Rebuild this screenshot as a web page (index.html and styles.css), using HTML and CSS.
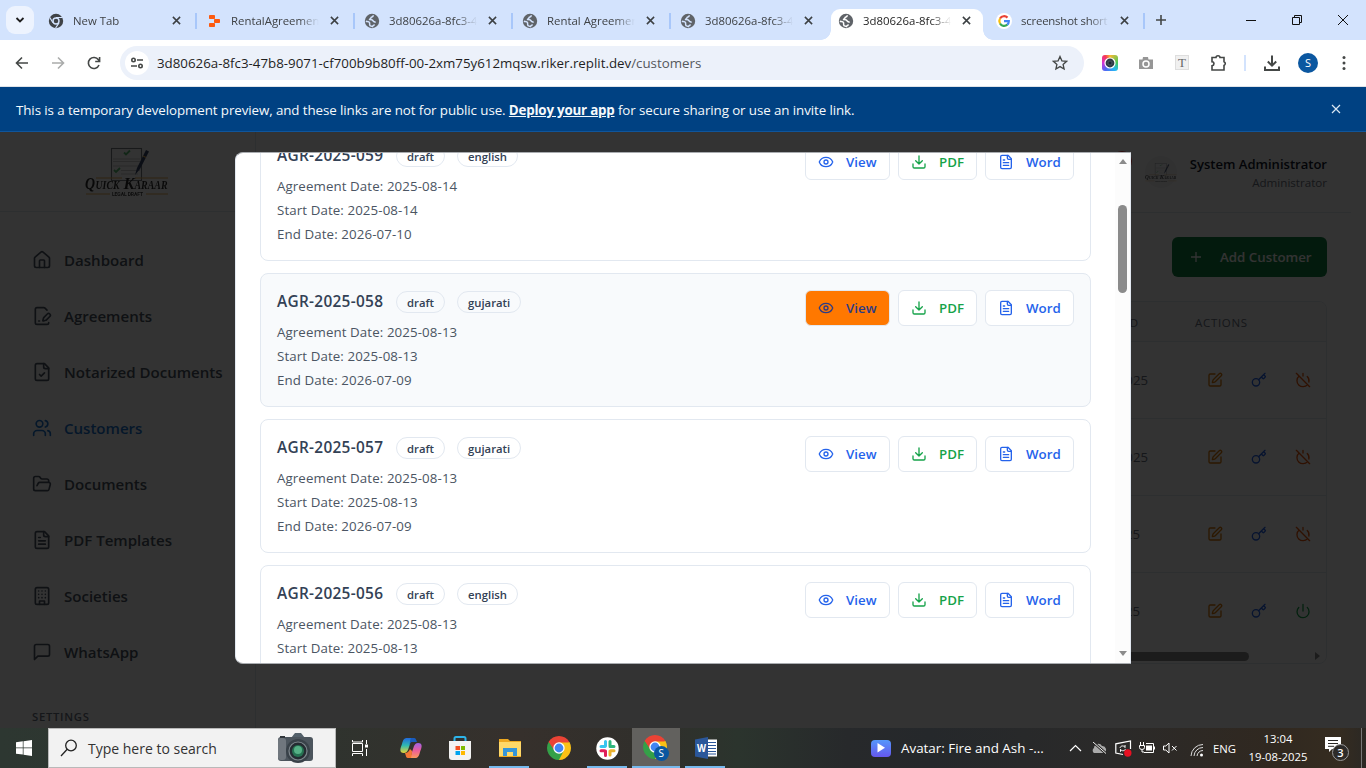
FILE: index.html
```html
<!DOCTYPE html>
<html lang="en">
<head>
<meta charset="utf-8">
<title>Customers</title>
<link rel="stylesheet" href="styles.css">
</head>
<body>
<svg class="defs" aria-hidden="true">
  <symbol id="x" viewBox="0 0 10 10"><path d="M1 1l8 8M9 1L1 9"/></symbol>
  <symbol id="globe" viewBox="0 0 16 16"><circle cx="8" cy="8" r="7.200" fill="#5f6368"/><path d="M9.300 2.200C9.300 3.800 8.300 4 7.300 4.300 6.900 5.800 5.800 5.400 5.600 6.500c1.700 0 3.200.2 3.600 1.500.3 1 2 .5 2.200 1.700M1.800 8.200c1.400.4 3.200.1 3.700 1.300.4 1-.3 2 .5 3.200l2.500.9c.3-1.300 1-1.600 2.200-1.900" fill="none" stroke="var(--tab)" stroke-width="1.500"/></symbol>
  <symbol id="home" viewBox="0 0 24 24"><path d="M15 21v-8a1 1 0 0 0-1-1h-4a1 1 0 0 0-1 1v8"/><path d="M3 10a2 2 0 0 1 .709-1.528l7-5.999a2 2 0 0 1 2.582 0l7 5.999A2 2 0 0 1 21 10v9a2 2 0 0 1-2 2H5a2 2 0 0 1-2-2z"/></symbol>
  <symbol id="sign" viewBox="0 0 24 24"><path d="m18 5-2.414-2.414A2 2 0 0 0 14.172 2H6a2 2 0 0 0-2 2v16a2 2 0 0 0 2 2h12a2 2 0 0 0 2-2"/><path d="M21.378 12.626a1 1 0 0 0-3.004-3.004l-4.010 4.012a2 2 0 0 0-.506.854l-.837 2.870a.5.5 0 0 0 .62.62l2.870-.837a2 2 0 0 0 .854-.506z"/><path d="M8 18h1"/></symbol>
  <symbol id="check" viewBox="0 0 24 24"><path d="M15 2H6a2 2 0 0 0-2 2v16a2 2 0 0 0 2 2h12a2 2 0 0 0 2-2V7Z"/><path d="M14 2v4a2 2 0 0 0 2 2h4M9 15l2 2 4-4"/></symbol>
  <symbol id="users" viewBox="0 0 24 24"><path d="M16 21v-2a4 4 0 0 0-4-4H6a4 4 0 0 0-4 4v2"/><circle cx="9" cy="7" r="4"/><path d="M22 21v-2a4 4 0 0 0-3-3.870M16 3.130a4 4 0 0 1 0 7.750"/></symbol>
  <symbol id="folder" viewBox="0 0 24 24"><path d="m6 14 1.500-2.900A2 2 0 0 1 9.240 10H20a2 2 0 0 1 1.940 2.500l-1.540 6a2 2 0 0 1-1.950 1.500H4a2 2 0 0 1-2-2V5a2 2 0 0 1 2-2h3.900a2 2 0 0 1 1.690.9l.81 1.200a2 2 0 0 0 1.670.9H18a2 2 0 0 1 2 2v2"/></symbol>
  <symbol id="text" viewBox="0 0 24 24"><path d="M15 2H6a2 2 0 0 0-2 2v16a2 2 0 0 0 2 2h12a2 2 0 0 0 2-2V7Z"/><path d="M14 2v4a2 2 0 0 0 2 2h4M10 9H8M16 13H8M16 17H8"/></symbol>
  <symbol id="building" viewBox="0 0 24 24"><rect x="4" y="2" width="16" height="20" rx="2"/><path d="M9 22v-4h6v4M8 6h.01M16 6h.01M12 6h.01M12 10h.01M12 14h.01M16 10h.01M16 14h.01M8 10h.01M8 14h.01"/></symbol>
  <symbol id="chat" viewBox="0 0 24 24"><path d="M21 15a2 2 0 0 1-2 2H7l-4 4V5a2 2 0 0 1 2-2h14a2 2 0 0 1 2 2z"/></symbol>
  <symbol id="eye" viewBox="0 0 24 24"><path d="M2.062 12.348a1 1 0 0 1 0-.696 10.750 10.750 0 0 1 19.876 0 1 1 0 0 1 0 .696 10.750 10.750 0 0 1-19.876 0"/><circle cx="12" cy="12" r="3"/></symbol>
  <symbol id="down" viewBox="0 0 24 24"><path d="M21 15v4a2 2 0 0 1-2 2H5a2 2 0 0 1-2-2v-4M7 10l5 5 5-5M12 15V3"/></symbol>
  <symbol id="edit" viewBox="0 0 24 24"><path d="M12 3H5a2 2 0 0 0-2 2v14a2 2 0 0 0 2 2h14a2 2 0 0 0 2-2v-7"/><path d="M18.375 2.625a1 1 0 0 1 3 3l-9.013 9.014a2 2 0 0 1-.853.505l-2.873.84a.5.5 0 0 1-.62-.62l.84-2.873a2 2 0 0 1 .506-.852z"/></symbol>
  <symbol id="key" viewBox="0 0 24 24"><path d="m15.500 7.500 2.300 2.300a1 1 0 0 0 1.400 0l2.100-2.100a1 1 0 0 0 0-1.400L19 4M21 2l-9.600 9.600"/><circle cx="7.500" cy="15.500" r="5.500"/></symbol>
  <symbol id="off" viewBox="0 0 24 24"><path d="M18.360 6.640A9 9 0 0 1 20.770 15M6.160 6.160a9 9 0 1 0 12.680 12.680M12 2v4M2 2l20 20"/></symbol>
  <symbol id="on" viewBox="0 0 24 24"><path d="M12 2v10M18.400 6.600a9 9 0 1 1-12.770.04"/></symbol>
  <symbol id="chrome" viewBox="0 0 24 24"><path d="M12 12L1.610 6A12 12 0 0 1 22.390 6z" fill="#ea4335"/><path d="M12 12L22.390 6A12 12 0 0 1 12 24z" fill="#fbc116"/><path d="M12 12v12A12 12 0 0 1 1.610 6z" fill="#34a048"/><path d="M12 6.500h10.600L17 13z" fill="#fbc116"/><path d="M7.300 14.800L1.610 6 4 3.500 12 6.500z" fill="#ea4335"/><path d="M7.200 14.700L1.610 6l3 9z" fill="#34a048"/><path d="M16.700 14.800L12 24l-3-5z" fill="#34a048"/><circle cx="12" cy="12" r="5.700" fill="#fff"/><circle cx="12" cy="12" r="4.400" fill="#4285f4"/></symbol>
  <symbol id="logo" viewBox="0 0 84 50"><rect x="26.500" y="1.500" width="30" height="32" fill="#fff" stroke="#62666c" stroke-width="1.100"/><path d="M39 5.500l2 2 4-4M29 23l2 2 4-4" fill="none" stroke="#3db45b" stroke-width="1.800"/><path d="M28 12h27M28 14.500h27M28 19h27M36 23.500h19M36 27h17" fill="none" stroke="#c4c4c4" stroke-width="1"/><path d="M50 28l2-7L61 3l3 1.500L55 22z" fill="#152850"/><path d="M58 9l3 1.500" stroke="#e7a43e" stroke-width="1.200"/><path d="M11 31h26M50 31h33M1 47h24M61 47h22" stroke="#e7a43e" stroke-width="1.100"/><g fill="#080808" stroke="none" font-family="Liberation Serif, serif" font-style="italic" font-weight="700"><text x="0" y="42" font-size="16" textLength="10" lengthAdjust="spacingAndGlyphs">Q</text><text x="10.500" y="42" font-size="11.500" textLength="24" lengthAdjust="spacingAndGlyphs">UICK</text><text x="38.500" y="42" font-size="16" textLength="11" lengthAdjust="spacingAndGlyphs">K</text><text x="49.500" y="42" font-size="11.500" textLength="33" lengthAdjust="spacingAndGlyphs">ARAAR</text></g><text x="27" y="49" font-family="Roboto, sans-serif" font-weight="700" font-size="5" textLength="31" fill="#222">LEGAL DRAFT</text></symbol>
</svg>
<div class="screen">
  <header class="tabstrip">
    <div class="tab-search"><svg width="10" height="10" viewBox="0 0 10 10"><path d="M1.500 3l3.500 3.500L8.500 3" fill="none" stroke="#1f1f1f" stroke-width="1.800"/></svg></div>
    <div class="tab"><svg class="fav" viewBox="0 0 16 16"><circle cx="8" cy="8" r="7.200" fill="#3f4347"/><circle cx="8" cy="8" r="3" fill="#3f4347" stroke="#d3e3fd" stroke-width="1.400"/><path d="M8 4.500h6.500M5 9.800L1.800 4.500M11 9.800L7.600 15" stroke="#d3e3fd" stroke-width="1.200"/></svg><span class="tab-title">New Tab</span><svg class="tab-x"><use href="#x"/></svg><i class="tab-sep"></i></div>
    <div class="tab"><svg class="fav" viewBox="0 0 16 16"><g fill="#fc5a10"><rect x="3" y="2" width="6" height="4" rx=".8"/><rect x="8" y="6" width="6" height="4" rx=".8"/><rect x="3" y="10" width="6" height="4" rx=".8"/></g></svg><span class="tab-title">RentalAgreemen</span><svg class="tab-x"><use href="#x"/></svg><i class="tab-sep"></i></div>
    <div class="tab"><svg class="fav"><use href="#globe"/></svg><span class="tab-title">3d80626a-8fc3-4</span><svg class="tab-x"><use href="#x"/></svg><i class="tab-sep"></i></div>
    <div class="tab"><svg class="fav"><use href="#globe"/></svg><span class="tab-title">Rental Agreemer</span><svg class="tab-x"><use href="#x"/></svg><i class="tab-sep"></i></div>
    <div class="tab"><svg class="fav"><use href="#globe"/></svg><span class="tab-title">3d80626a-8fc3-4</span><svg class="tab-x"><use href="#x"/></svg></div>
    <div class="tab tab-active"><svg class="fav"><use href="#globe"/></svg><span class="tab-title">3d80626a-8fc3-4</span><svg class="tab-x"><use href="#x"/></svg></div>
    <div class="tab"><svg class="fav" viewBox="0 0 16 16"><circle cx="8" cy="8" r="8" fill="#fff"/><g fill="none" stroke-width="2.200"><path d="M4 5.500A4.800 4.800 0 0 1 11.500 4.600" stroke="#ea4335"/><path d="M4 5.500a5 5 0 0 0 0 5" stroke="#fbbc05"/><path d="M4 10.500a4.800 4.800 0 0 0 7.300 1.200" stroke="#34a853"/><path d="M8 8.200h4.800a4.800 4.800 0 0 1-1.500 3.500" stroke="#4285f4"/></g></svg><span class="tab-title tight">screenshot short</span><svg class="tab-x"><use href="#x"/></svg><i class="tab-sep"></i></div>
    <svg class="new-tab" viewBox="0 0 12 12"><path d="M6 1v10M1 6h10" stroke="#444746" stroke-width="1.600"/></svg>
    <div class="win-buttons">
      <svg viewBox="0 0 12 12"><path d="M1 6.500h10" stroke="#111"/></svg>
      <svg viewBox="0 0 12 12"><path d="M1.500 3.500h7v7h-7zM3.500 3V1.500h7v7H9" fill="none" stroke="#111"/></svg>
      <svg viewBox="0 0 12 12"><path d="M1 1l10 10M11 1L1 11" stroke="#111"/></svg>
    </div>
  </header>
  <nav class="toolbar">
    <span class="tool"><svg width="14" height="14" viewBox="0 0 14 14"><path d="M13 7H2M7 1.500L1.500 7 7 12.500" class="t1"/></svg></span>
    <span class="tool dim"><svg width="14" height="14" viewBox="0 0 14 14"><path d="M1 7h11M7 1.500L12.500 7 7 12.500" class="t1"/></svg></span>
    <span class="tool"><svg width="14" height="14" viewBox="0 0 14 14"><path d="M12 9a5.500 5.500 0 1 1-.6-5.200L12.500 5M12.600 1v4.500H8.200" class="t1"/></svg></span>
    <div class="omnibox">
      <span class="site-info"><svg width="14" height="14" viewBox="0 0 14 14"><circle cx="3.500" cy="4" r="1.700" class="t1"/><circle cx="10.500" cy="10" r="1.700" class="t1"/><path d="M7 4h6M1 10h6" class="t1"/></svg></span>
      <span class="url">3d80626a-8fc3-47b8-9071-cf700b9b80ff-00-2xm75y612mqsw.riker.replit.dev<span class="path">/customers</span></span>
      <svg class="star" viewBox="0 0 16 16"><path d="M8 1.500l1.900 4.300 4.700.5-3.500 3.100 1 4.600L8 11.600 3.900 14l1-4.600L1.400 6.300l4.700-.5z" class="t1"/></svg>
    </div>
    <span class="tool"><span class="ext-shot"><svg width="12" height="12" viewBox="0 0 12 12"><circle cx="6" cy="6" r="5" fill="#303b46" stroke="#fff" stroke-width="1.200"/><circle cx="6" cy="6" r="2" fill="#1c2733" stroke="#53616e" stroke-width=".7"/></svg></span></span>
    <span class="tool"><svg width="16" height="16" viewBox="0 0 16 16"><path d="M1 4.500h3.500L5 2h5l.5 2.500H15V14H1z" fill="#969696"/><circle cx="8" cy="9" r="3" fill="#969696" stroke="#fff" stroke-width="1.500"/></svg></span>
    <span class="tool"><span class="ext-t">T</span></span>
    <span class="tool"><svg width="18" height="18" viewBox="0 0 18 18"><path d="M3 3.500h4a2 1.800 0 0 1 4 0h4v4.300a1.900 1.900 0 0 1 0 3.600V16H3v-4.300c2.600-.3 2.600-3.700 0-4z" class="t1"/></svg></span>
    <i class="tool-sep"></i>
    <span class="tool"><svg width="18" height="18" viewBox="0 0 18 18"><path d="M9 1.500v10M4.800 7.500L9 11.700l4.200-4.200M2 12.500V16h14v-3.500" class="t1 t2"/></svg></span>
    <span class="tool"><span class="profile">S</span></span>
    <span class="tool"><svg width="4" height="16" viewBox="0 0 4 16"><g fill="#444746"><circle cx="2" cy="2.500" r="1.500"/><circle cx="2" cy="8" r="1.500"/><circle cx="2" cy="13.500" r="1.500"/></g></svg></span>
  </nav>
  <div class="banner"><span class="banner-text">This is a temporary development preview, and these links are not for public use. <b>Deploy your app</b> for secure sharing or use an invite link.</span><svg class="banner-x"><use href="#x"/></svg></div>

  <div class="viewport">
    <div class="app">
      <aside class="sidebar">
        <div class="brand"><svg width="84" height="50"><use href="#logo"/></svg></div>
        <ul class="menu">
          <li><svg class="ic"><use href="#home"/></svg>Dashboard</li>
          <li><svg class="ic"><use href="#sign"/></svg>Agreements</li>
          <li><svg class="ic"><use href="#check"/></svg>Notarized Documents</li>
          <li class="current"><svg class="ic"><use href="#users"/></svg>Customers</li>
          <li><svg class="ic"><use href="#folder"/></svg>Documents</li>
          <li><svg class="ic"><use href="#text"/></svg>PDF Templates</li>
          <li><svg class="ic"><use href="#building"/></svg>Societies</li>
          <li><svg class="ic"><use href="#chat"/></svg>WhatsApp</li>
        </ul>
        <div class="menu-heading">SETTINGS</div>
      </aside>
      <main class="main">
        <div class="topbar">
          <i class="alert-dot"></i>
          <span class="user-pic"><svg width="32" height="19"><use href="#logo"/></svg></span>
          <div class="user"><strong>System Administrator</strong><span>Administrator</span></div>
        </div>
        <div class="page">
          <button class="add"><svg width="16" height="16" viewBox="0 0 16 16"><path d="M8 3v10M3 8h10" stroke="#fff" stroke-width="1.300"/></svg><span>Add Customer</span></button>
          <div class="table">
            <div class="row head"><span class="created">D</span><span class="act-title">ACTIONS</span></div>
            <div class="row"><span class="created">2025</span><span class="acts"><svg class="amber"><use href="#edit"/></svg><svg class="blue"><use href="#key"/></svg><svg class="orange"><use href="#off"/></svg></span></div>
            <div class="row"><span class="created">2025</span><span class="acts"><svg class="amber"><use href="#edit"/></svg><svg class="blue"><use href="#key"/></svg><svg class="orange"><use href="#off"/></svg></span></div>
            <div class="row"><span class="created short">2025</span><span class="acts"><svg class="amber"><use href="#edit"/></svg><svg class="blue"><use href="#key"/></svg><svg class="orange"><use href="#off"/></svg></span></div>
            <div class="row"><span class="created short">2025</span><span class="acts"><svg class="amber"><use href="#edit"/></svg><svg class="blue"><use href="#key"/></svg><svg class="green"><use href="#on"/></svg></span></div>
            <div class="hscroll"><i class="hthumb"></i><i class="harrow"></i></div>
          </div>
        </div>
      </main>
    </div>
    <div class="overlay"></div>
    <section class="modal">
      <div class="cards">
        <article class="card">
          <div class="info"><div class="title-row"><h3>AGR-2025-059</h3><span class="badge">draft</span><span class="badge">english</span></div><p>Agreement Date: 2025-08-14</p><p>Start Date: 2025-08-14</p><p>End Date: 2026-07-10</p></div>
          <div class="btns"><span class="btn view"><svg><use href="#eye"/></svg>View</span><span class="btn pdf"><svg><use href="#down"/></svg>PDF</span><span class="btn word"><svg><use href="#text"/></svg>Word</span></div>
        </article>
        <article class="card hover">
          <div class="info"><div class="title-row"><h3>AGR-2025-058</h3><span class="badge">draft</span><span class="badge">gujarati</span></div><p>Agreement Date: 2025-08-13</p><p>Start Date: 2025-08-13</p><p>End Date: 2026-07-09</p></div>
          <div class="btns"><span class="btn view hot"><svg><use href="#eye"/></svg>View</span><span class="btn pdf"><svg><use href="#down"/></svg>PDF</span><span class="btn word"><svg><use href="#text"/></svg>Word</span></div>
        </article>
        <article class="card">
          <div class="info"><div class="title-row"><h3>AGR-2025-057</h3><span class="badge">draft</span><span class="badge">gujarati</span></div><p>Agreement Date: 2025-08-13</p><p>Start Date: 2025-08-13</p><p>End Date: 2026-07-09</p></div>
          <div class="btns"><span class="btn view"><svg><use href="#eye"/></svg>View</span><span class="btn pdf"><svg><use href="#down"/></svg>PDF</span><span class="btn word"><svg><use href="#text"/></svg>Word</span></div>
        </article>
        <article class="card last">
          <div class="info"><div class="title-row"><h3>AGR-2025-056</h3><span class="badge">draft</span><span class="badge">english</span></div><p>Agreement Date: 2025-08-13</p><p>Start Date: 2025-08-13</p></div>
          <div class="btns"><span class="btn view"><svg><use href="#eye"/></svg>View</span><span class="btn pdf"><svg><use href="#down"/></svg>PDF</span><span class="btn word"><svg><use href="#text"/></svg>Word</span></div>
        </article>
      </div>
      <div class="vscroll"><i class="arrow up"></i><i class="vthumb"></i><i class="arrow dn"></i></div>
    </section>
  </div>

  <footer class="taskbar">
    <span class="start"><svg width="16" height="16" viewBox="0 0 16 16" fill="#fff"><path d="M0 2.200l6.800-.9v6.300H0zM7.500 1.200L16 0v7.600H7.500zM0 8.300h6.800v6.300L0 13.700zM7.500 8.300H16V16l-8.500-1.200z"/></svg></span>
    <div class="search"><svg width="18" height="18" viewBox="0 0 18 18"><circle cx="11" cy="6.500" r="5.300" fill="none" stroke="#222" stroke-width="1.300"/><path d="M7.200 10.300L1 17" stroke="#222" stroke-width="1.300"/></svg><span>Type here to search</span>
      <svg class="camera" width="37" height="32" viewBox="0 0 37 32"><path d="M14 6l4-5h6l4 5z" fill="#54616b"/><rect x="1" y="5" width="35" height="24" rx="3" fill="#4c555d"/><rect x="1" y="6" width="8" height="22" rx="3" fill="#70777e"/><rect x="3" y="4" width="5" height="2" fill="#30363b"/><circle cx="21" cy="19" r="12" fill="#394249"/><circle cx="21" cy="19" r="9" fill="#252c32" stroke="#7d868c" stroke-width="1.200"/><circle cx="21" cy="19" r="6" fill="#267252"/><circle cx="21" cy="18" r="4" fill="#55b085"/></svg></div>
    <span class="task taskview"><svg width="18" height="18" viewBox="0 0 18 18"><path d="M1.500 4.500h10v8h-10zM1.500 1v2h10V1M1.500 17v-2.500h10V17M15.500 1v4M15.500 10v7" fill="none" stroke="#fff"/><rect x="14" y="5.500" width="3" height="3" fill="#fff"/></svg></span>
    <span class="task"><svg width="22" height="20" viewBox="0 0 22 20"><defs><linearGradient id="ca" x1="0" y1="0" x2="0" y2="1"><stop offset="0" stop-color="#2169dd"/><stop offset=".5" stop-color="#30b9b0"/><stop offset="1" stop-color="#e9d436"/></linearGradient><linearGradient id="cb" x1="0" y1="0" x2="0" y2="1"><stop offset="0" stop-color="#9d62e8"/><stop offset=".5" stop-color="#ec5d9b"/><stop offset="1" stop-color="#fb985b"/></linearGradient></defs><path d="M7 0h8c-3 0-4 2-5 6l-2 6c-1 2-2 3-4 3-5 0-4-4-2-9 1-4 2-6 5-6z" fill="url(#ca)"/><path d="M11 0h3c2 0 2 2 3 4h-5c-2 0-2 2-3 4l1-4c0-2 1-4 1-4z" fill="#195bbd"/><path d="M15 20H7c3 0 4-2 5-6l2-6c1-2 2-3 4-3 5 0 4 4 2 9-1 4-2 6-5 6z" fill="url(#cb)"/><path d="M11 20H8c-2 0-2-2-3-5 3 0 4-2 5-4l2 2c0 4-1 7-1 7z" fill="#f47835"/></svg></span>
    <span class="task store"><svg width="24" height="24" viewBox="0 0 24 24"><path d="M6.500 6V2.500q0-1.500 1.500-1.500h8q1.500 0 1.500 1.500V6" fill="none" stroke="#2db4e9" stroke-width="2"/><path d="M1 5h22v16q0 3-3 3H4q-3 0-3-3z" fill="#f3f3f3"/><path d="M7.500 10H12v4H7.500z" fill="#f25022"/><path d="M13 10h4v4h-4z" fill="#7fba00"/><path d="M7.500 15H12v4H7.500z" fill="#00a4ef"/><path d="M13 15h4v4h-4z" fill="#ffb900"/></svg></span>
    <span class="task run"><svg width="22" height="20" viewBox="0 0 22 20"><path d="M0 1h9l2 2h11v16H0z" fill="#eea820"/><path d="M0 4h22v14H0z" fill="#ffd868"/><path d="M4 18v-8h14v8h-4v-4H8v4z" fill="#3595d8"/></svg></span>
    <span class="task"><svg width="24" height="24"><use href="#chrome"/></svg></span>
    <span class="task run"><svg width="23" height="23" viewBox="0 0 23 23"><circle cx="11.500" cy="11.500" r="11.200" fill="#fff"/><g fill="none" stroke-width="3" stroke-linecap="round"><path d="M9.500 4.500v4.500M5 9.500h4" stroke="#36c5f0"/><path d="M14 4.500V9M14 9.500h4" stroke="#2eb67d"/><path d="M9.500 14v4.500M5 13.800h3.500" stroke="#e01e5a"/><path d="M14 14v4M14.500 13.800H18" stroke="#ecb22e"/></g></svg></span>
    <span class="task run active"><svg width="26" height="26" viewBox="0 0 26 26"><use href="#chrome" width="24" height="24"/><circle cx="18.500" cy="18.500" r="7.500" fill="#0b57a0"/><text x="15.600" y="22.200" font-family="Open Sans, sans-serif" font-size="10" fill="#fff">S</text></svg></span>
    <span class="task run"><svg width="22" height="22" viewBox="0 0 22 22"><path d="M12 2.500h10v17H12z" fill="#fff"/><path d="M13 5.500h8M13 8.500h8M13 11.500h8M13 14.500h8M13 17h8" stroke="#2b579a" stroke-width="1.100"/><path d="M0 2.500L13 0v22L0 19.500z" fill="#2b579a"/><text x="2" y="14.500" font-family="Open Sans, sans-serif" font-weight="700" font-size="10" textLength="9" lengthAdjust="spacingAndGlyphs" fill="#fff">W</text></svg></span>
    <div class="tray">
      <span class="play"><svg width="8" height="10" viewBox="0 0 8 10"><path d="M.5 0v9.500L8 4.700z" fill="#fff"/></svg></span>
      <span class="news">Avatar: Fire and Ash -...</span>
      <svg class="chev" width="13" height="8" viewBox="0 0 13 8"><path d="M1 7l5.500-5.500L12 7" fill="none" stroke="#fff" stroke-width="1.200"/></svg>
      <svg class="cloud" width="16" height="12" viewBox="0 0 16 12"><path d="M3 11a3 3 0 0 1 0-5 4.300 4.300 0 0 1 8-2 3.700 3.700 0 0 1 2 7z" fill="#aaa"/><path d="M2 0l13 11.500" stroke="#292827" stroke-width="2.600"/><path d="M2 0l13 11.500" stroke="#eee"/></svg>
      <svg class="sync" width="17" height="17" viewBox="0 0 17 17"><path d="M8 14.500L.8 13V3.800L15.500 1v8" fill="none" stroke="#fff" stroke-width="1.200"/><path d="M5 8c.5-2.500 4-2.800 5-.5V5M10.500 9c-.5 2-4 2.500-5 .3v2.500" fill="none" stroke="#fff"/><circle cx="12.800" cy="13" r="3.700" fill="#e81123"/></svg>
      <svg class="batt" width="16" height="12" viewBox="0 0 16 12"><path d="M1.500 0v3M4.500 0v3M.5 3.500h5v2a2.500 2 0 0 1-5 0zM3 8v2h2M7 1.500h7.500v9H5M15.500 4.500v3" fill="none" stroke="#fff"/><path d="M7 3.500h6v5H7z" fill="#fff"/></svg>
      <svg class="vol" width="15" height="12" viewBox="0 0 15 12"><path d="M.5 4h2.300L6 1v10L2.800 8H.5zM9 4l4.500 4.500M13.500 4L9 8.500" fill="none" stroke="#fff"/></svg>
      <svg class="wifi" width="14" height="14" viewBox="0 0 14 14"><g fill="none" stroke="#ddd"><path d="M1 13A12 12 0 0 1 13 1.500M4 13a9 9 0 0 1 9-8.500M7 13a6 6 0 0 1 6-5.500"/></g><circle cx="11.500" cy="12" r="1.500" fill="#fff"/></svg>
      <span class="lang">ENG</span>
      <span class="clock"><span>13:04</span><span>19-08-2025</span></span>
      <svg class="notif" width="26" height="26" viewBox="0 0 26 26"><path d="M1 1h16v12H8l-3 3v-3H1z" fill="#fff"/><path d="M4 4.500h10M4 7.500h10M4 10.300h6" stroke="#292826"/><circle cx="16.500" cy="16.500" r="8" fill="#2d2b29" stroke="#999"/><text x="13.300" y="20.500" font-family="Open Sans, sans-serif" font-weight="600" font-size="11" fill="#fff">3</text></svg>
      <i class="peek"></i>
    </div>
  </footer>
</div>
</body>
</html>
```
FILE: styles.css
```css
* { box-sizing: border-box; }
body { margin: 0; font-family: "Open Sans", "Noto Sans", sans-serif; overflow: hidden; white-space: nowrap; }
svg { flex: none; display: block; }
i { display: block; flex: none; }
.defs { display: none; }
.screen { width: 1366px; height: 768px; display: flex; flex-direction: column; }

/* Browser tab strip */
.tabstrip { --tab: #d3e3fd; height: 40px; background: var(--tab); display: flex; align-items: flex-end; flex: none; }
.tab-search { width: 28px; height: 28px; margin: 0 4px 6px 6px; border-radius: 9px; background: #edf3fe; display: grid; place-items: center; }
.tab { width: 158px; height: 31px; padding: 0 0 8px 10px; display: flex; align-items: center; flex: none; color: #3f4245; }
.fav { width: 16px; height: 16px; margin-right: 9px; }
.tab-title { width: 88px; overflow: hidden; font-size: 11.400px; line-height: 16px; -webkit-mask-image: linear-gradient(90deg, #000 68px, transparent 88px); mask-image: linear-gradient(90deg, #000 68px, transparent 88px); }
.tight { letter-spacing: -.2px; }
.tab-x { width: 9px; height: 9px; margin-left: 11px; stroke: #3c4043; stroke-width: 1.700; fill: none; }
.tab-sep { width: 2px; height: 16px; margin-left: 14px; margin-right: -2px; background: #a8c7fa; }
.tab-active { --tab: #fff; background: var(--tab); border-radius: 9px 9px 0 0; width: 152px; margin-left: 3px; margin-right: 3px; padding-left: 7px; color: #1f1f1f; position: relative; }
.tab-active::before, .tab-active::after { content: ""; position: absolute; bottom: 0; width: 10px; height: 10px; }
.tab-active::before { left: -10px; background: radial-gradient(circle at 0 0, transparent 9.500px, #fff 10px); }
.tab-active::after { right: -10px; background: radial-gradient(circle at 100% 0, transparent 9.500px, #fff 10px); }
.new-tab { width: 12px; height: 12px; margin: 0 0 14px 11px; }
.win-buttons { display: flex; margin-left: auto; padding: 0 17px 14px 0; gap: 34px; }
.win-buttons svg { width: 12px; height: 12px; }

/* Address bar row */
.toolbar { height: 47px; flex: none; display: flex; align-items: center; padding: 0 4px 1px; background: #fff; border-bottom: 1px solid #dfe3e8; }
.tool { width: 36px; display: grid; place-items: center; flex: none; }
.dim { opacity: .45; }
.t1 { fill: none; stroke: #444746; stroke-width: 1.600; }
.t2 { stroke-width: 2; }
.omnibox { width: 964px; height: 34px; margin: 0 8px; border-radius: 17px; background: #ecf1fa; display: flex; align-items: center; padding: 0 16px 0 5px; }
.site-info { width: 24px; height: 24px; border-radius: 50%; background: #fff; display: grid; place-items: center; margin-right: 8px; }
.url { font-size: 13.320px; line-height: 20px; color: #1f1f1f; }
.path { color: #55585c; }
.star { width: 16px; height: 16px; margin-left: auto; }
.star .t1 { stroke-width: 1.300; }
.ext-shot { width: 16px; height: 16px; border-radius: 3px; display: grid; place-items: center; background: conic-gradient(#f8ba31, #41c85c 25%, #25b8f4 40%, #5365f3 60%, #d531d8 75%, #f53757 90%, #f8ba31); }
.ext-t { width: 14px; height: 15px; background: #f0f0f0; border: 1px solid #dedede; font: 13px/13px "Liberation Serif", serif; color: #666; text-align: center; }
.tool-sep { width: 2px; height: 16px; margin: 0 8px; background: #d3e3fd; }
.profile { width: 20px; height: 20px; border-radius: 50%; background: #0b57a0; color: #fff; font-size: 11px; line-height: 20px; text-align: center; }

/* Preview notice */
.banner { height: 45px; flex: none; background: #004182; border-bottom: 1px solid #0f559b; display: flex; align-items: center; justify-content: space-between; padding: 2px 25px 0 16px; color: #f5f9fc; }
.banner-text { font-size: 13.350px; font-weight: 500; line-height: 20px; letter-spacing: -.09px; }
.banner-text b { text-decoration: underline; font-weight: 700; letter-spacing: -.2px; }
.banner-x { width: 10px; height: 10px; stroke: #d9e6f2; fill: none; stroke-width: 1.200; margin-bottom: 3px; }

/* Application */
.viewport { height: 596px; flex: none; position: relative; overflow: hidden; }
.app { display: flex; height: 596px; background: #fff; }
.sidebar { width: 256px; border-right: 1px solid #e2e8f0; flex: none; }
.brand { height: 80px; border-bottom: 1px solid #e2e8f0; display: flex; padding: 15px 0 0 85px; }
.brand svg { opacity: .85; }
.menu { list-style: none; margin: 0; padding: 20px 0 0 32px; }
.menu li { height: 56px; display: flex; align-items: center; gap: 12px; font-size: 15.050px; font-weight: 600; color: #4b5563; }
.ic { width: 20px; height: 20px; fill: none; stroke: currentColor; stroke-width: 2; stroke-linecap: round; stroke-linejoin: round; }
.menu .current { color: #1b76d1; }
.menu-heading { padding: 29px 0 0 32px; font-size: 11.300px; line-height: 16px; font-weight: 600; letter-spacing: .7px; color: #6b7280; }
.main { width: 1095px; }
.topbar { height: 81px; border-bottom: 1px solid #e2e8f0; display: flex; justify-content: flex-end; padding: 20px 24px 0 0; }
.alert-dot { width: 20px; height: 20px; border-radius: 50%; background: #ef4444; margin: -1px 13px 0 0; }
.user-pic { width: 32px; height: 32px; margin: 4px 12px 0 0; border-radius: 50%; background: #f3f4f6; display: grid; place-items: center; flex: none; }
.user-pic svg { opacity: .7; }
.user { display: flex; flex-direction: column; align-items: flex-end; line-height: 20px; color: #6b7280; font-size: 11.600px; padding-top: 2px; width: 138px; }
.user strong { font-size: 13.050px; font-weight: 600; color: #0f172a; }
.user span { line-height: 17px; }
.page { padding: 24px 24px 0; display: flex; flex-direction: column; align-items: flex-end; }
.add { width: 155px; height: 40px; border: 0; border-radius: 6px; background: #128142; color: #fff; font: 600 13.300px "Open Sans", sans-serif; display: flex; align-items: center; gap: 16px; padding: 0 16px; }
.table { width: 1046px; height: 363px; margin-top: 24px; border: 1px solid #e2e8f0; border-radius: 8px; overflow: hidden; }
.row { height: 77px; border-bottom: 1px solid #e2e8f0; display: flex; align-items: center; font-size: 13.200px; color: #6b7280; }
.row:nth-child(5) { border-color: transparent; }
.head { height: 40px; background: #f9fafb; font-size: 11.500px; font-weight: 500; padding-top: 1px; }
.created { width: 866px; text-align: right; }
.head .created { width: 856px; }
.short { width: 858px; }
.act-title { margin-left: 57px; letter-spacing: .7px; }
.acts { margin-left: auto; display: flex; gap: 28px; padding-right: 15px; }
.acts svg { width: 16px; height: 16px; fill: none; stroke: currentColor; stroke-width: 2; stroke-linecap: round; stroke-linejoin: round; }
.amber { color: #d97706; }
.blue { color: #2563eb; }
.orange { color: #ea580c; }
.green { color: #16a34a; }
.hscroll { height: 15px; display: flex; align-items: center; background: #fcfcfc; justify-content: flex-end; }
.hthumb { width: 700px; height: 9px; border-radius: 5px; background: #8b8b8b; margin: -3px 66px 0 0; }
.harrow { border-left: 5px solid #8b8b8b; border-top: 4.500px solid transparent; border-bottom: 4.500px solid transparent; margin: -3px 6px 0 0; }
.overlay { position: absolute; inset: 0; background: rgba(0, 0, 0, .8); }

/* Agreement list dialog */
.modal { position: absolute; left: 235px; top: 20px; width: 896px; height: 512px; border: 1px solid #e2e8f0; border-radius: 8px 0 0 8px; background: #fff; overflow: hidden; display: flex; justify-content: space-between; border-top-color: #a9acb0; border-bottom-color: #a9acb0; }
.cards { margin: -26px 0 0 24px; width: 831px; display: flex; flex-direction: column; gap: 12px; }
.card { height: 134px; flex: none; border: 1px solid #e2e8f0; border-radius: 8px; padding: 16px; display: flex; justify-content: space-between; background: #fff; }
.hover { background: #f8fafc; }
.title-row { height: 24px; display: flex; align-items: center; gap: 12px; margin-bottom: 8px; }
.card h3 { margin: 0; width: 107px; font-size: 15.400px; letter-spacing: .3px; line-height: 24px; font-weight: 600; color: #334155; }
.badge { height: 22px; border: 1px solid #e2e8f0; border-radius: 11px; padding: 1px 10px 0; font-size: 11.300px; line-height: 20px; font-weight: 600; color: #334155; }
.card p { margin: 4px 0 0; font-size: 13.300px; letter-spacing: .1px; line-height: 20px; color: #4b5563; }
.btns { display: flex; gap: 8px; }
.btn { height: 36px; border: 1px solid #e2e8f0; border-radius: 6px; background: #fff; padding: 0 12px; display: flex; align-items: center; gap: 12px; font-size: 13.300px; font-weight: 600; }
.btn svg { width: 16px; height: 16px; fill: none; stroke: currentColor; stroke-width: 2; stroke-linecap: round; stroke-linejoin: round; }
.view { width: 85px; color: #2563eb; }
.pdf { width: 79px; color: #16a34a; }
.word { width: 89px; color: #2563eb; }
.hot { background: #ff7800; color: #2d3c86; }
.vscroll { width: 15px; background: #fcfcfc; display: flex; flex-direction: column; align-items: center; padding: 6px 0 7px; }
.arrow { border-left: 4.500px solid transparent; border-right: 4.500px solid transparent; }
.up { border-bottom: 5px solid #8b8b8b; }
.dn { border-top: 5px solid #8b8b8b; margin-top: auto; }
.vthumb { width: 9px; height: 88px; border-radius: 5px; background: #8b8b8b; margin-top: 41px; }

/* Desktop taskbar */
.taskbar { height: 40px; flex: none; display: flex; background: linear-gradient(90deg, #2d3731 0, #2f332e 24%, #36302c 38%, #302f2b 48%, #2b342d 54%, #27292b 62%, #25282b 68%, #2b2a29 82%, #302820 93%, #352c20 98%, #2b2824); color: #fff; }
.start { width: 48px; display: grid; place-items: center; }
.search { width: 288px; background: #f2f2f2; border: 1px solid #b9b9b9; display: flex; align-items: center; padding: 0 21px 0 11px; color: #333; font-size: 14px; }
.search span { margin-left: 10px; }
.camera { margin-left: auto; }
.task { width: 49px; display: grid; place-items: center; flex: none; position: relative; }
.taskview { width: 48px; margin-right: 2px; }
.store { margin-right: 1px; }
.run::after { content: ""; position: absolute; bottom: 0; left: 4px; width: 40px; height: 2px; background: #76b9ed; }
.active { background: #62615e; width: 48px; margin-right: 1px; }
.active::after { left: 0; width: 48px; }
.tray { margin-left: auto; display: flex; align-items: center; }
.play { width: 20px; height: 17px; border-radius: 4px; background: linear-gradient(#5597fb, #6557ee); display: grid; place-items: center; margin-right: 10px; }
.news { font-size: 13.400px; width: 143px; }
.chev { margin-left: 25px; }
.cloud { margin-left: 9px; }
.sync { margin-left: 8px; }
.batt { margin-left: 7px; }
.vol { margin-left: 8px; }
.wifi { margin-left: 12px; margin-top: 4px; }
.lang { font-size: 11.300px; width: 23px; margin-left: 9px; }
.clock { width: 60px; margin-left: 12px; display: flex; flex-direction: column; align-items: center; font-size: 11.300px; line-height: 18px; }
.notif { margin-left: 16px; margin-top: 2px; }
.peek { width: 1px; height: 40px; background: #777; margin: 0 4px 0 11px; }
```
